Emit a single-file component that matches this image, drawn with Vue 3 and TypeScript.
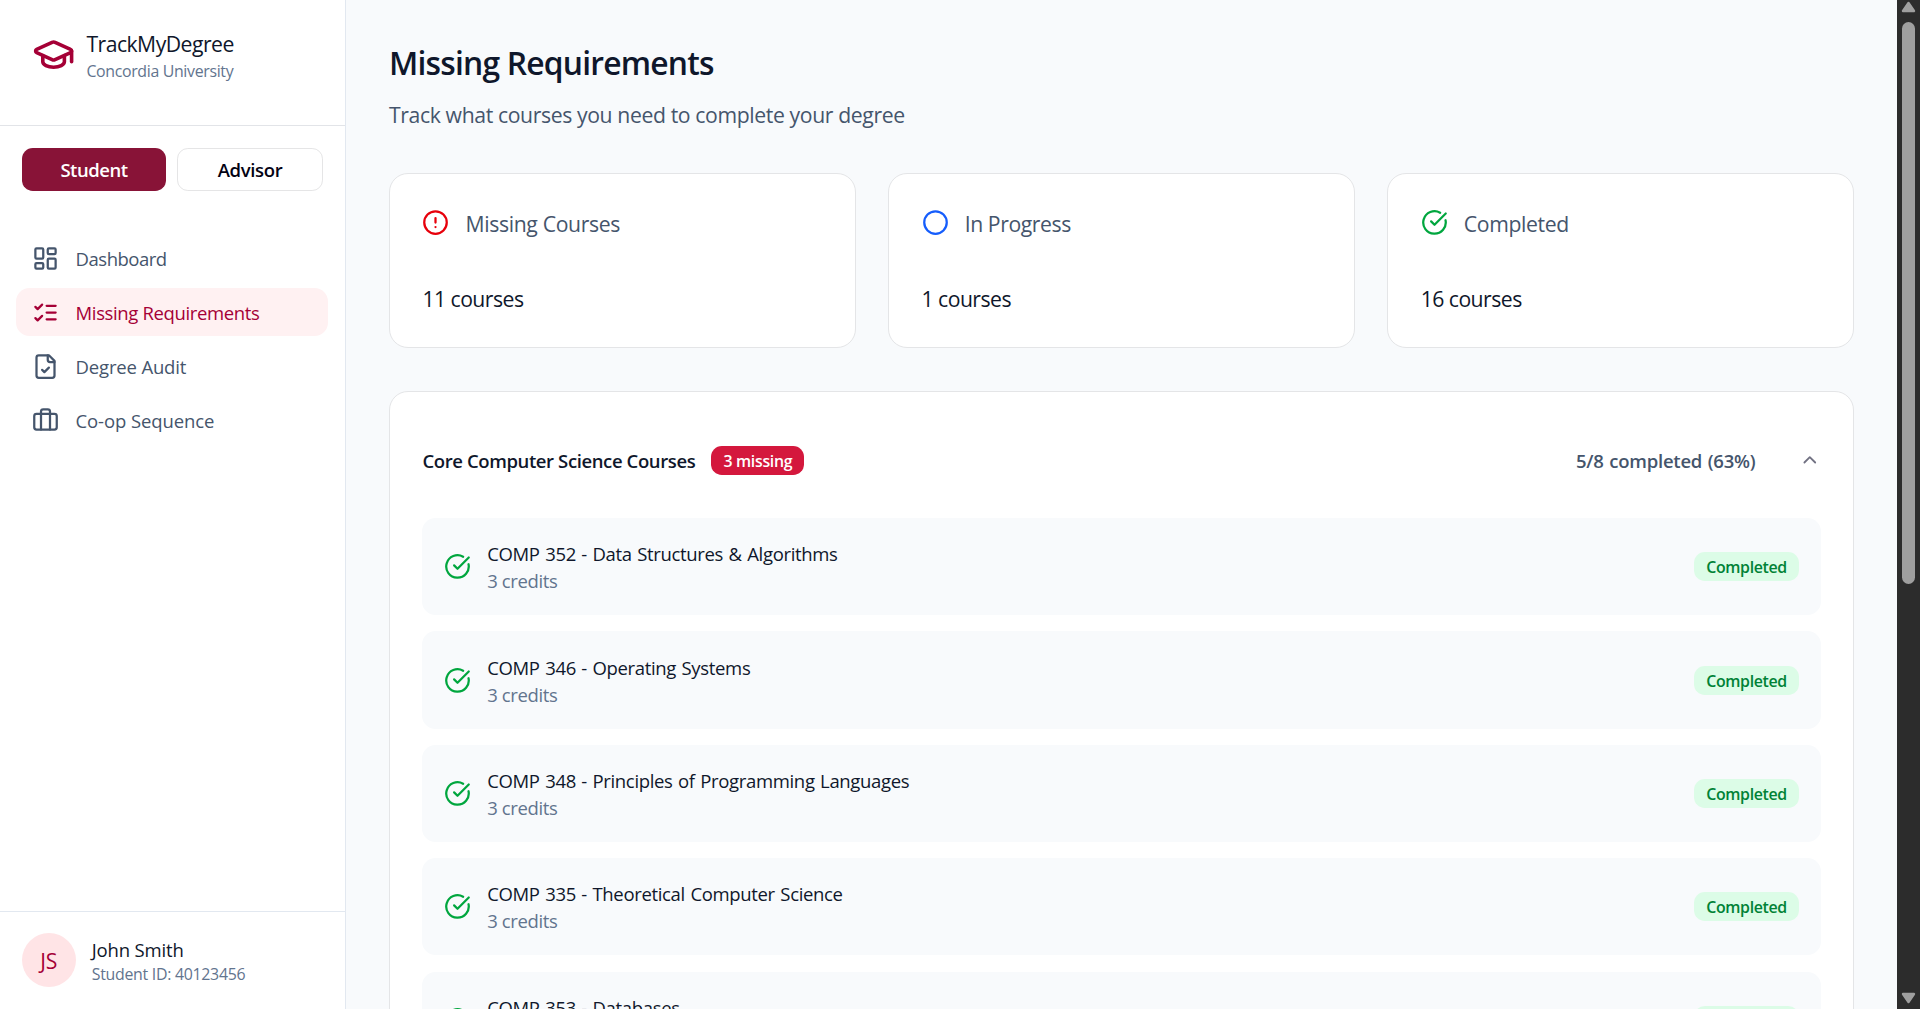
<script setup lang="ts">
interface NavItem {
  label: string
  icon: 'dashboard' | 'checks' | 'audit' | 'coop'
  spacing: number
  active?: boolean
}

interface Summary {
  label: string
  count: number
  tone: 'missing' | 'progress' | 'done'
  spacing: number
}

interface Course {
  code: string
  title: string
  credits: number
}

const navItems: NavItem[] = [
  { label: 'Dashboard', icon: 'dashboard', spacing: -0.026 },
  { label: 'Missing Requirements', icon: 'checks', spacing: -0.02, active: true },
  { label: 'Degree Audit', icon: 'audit', spacing: -0.009 },
  { label: 'Co-op Sequence', icon: 'coop', spacing: -0.006 },
]

const summaries: Summary[] = [
  { label: 'Missing Courses', count: 11, tone: 'missing', spacing: -0.017 },
  { label: 'In Progress', count: 1, tone: 'progress', spacing: -0.02 },
  { label: 'Completed', count: 16, tone: 'done', spacing: -0.017 },
]

const courses: Course[] = [
  { code: 'COMP 352', title: 'Data Structures & Algorithms', credits: 3 },
  { code: 'COMP 346', title: 'Operating Systems', credits: 3 },
  { code: 'COMP 348', title: 'Principles of Programming Languages', credits: 3 },
  { code: 'COMP 335', title: 'Theoretical Computer Science', credits: 3 },
  { code: 'COMP 353', title: 'Databases', credits: 3 },
]
</script>

<template>
  <div class="app">
    <aside class="sidebar">
      <header class="brand">
        <svg class="icon logo" viewBox="0 0 24 24">
          <path d="M21.42 10.922a1 1 0 0 0-.019-1.838L12.83 5.18a2 2 0 0 0-1.66 0L2.6 9.08a1 1 0 0 0 0 1.832l8.57 3.908a2 2 0 0 0 1.66 0z" />
          <path d="M22 10v6" />
          <path d="M6 12.5V16a6 3 0 0 0 12 0v-3.5" />
        </svg>
        <div class="brand-text">
          <div class="brand-name">TrackMyDegree</div>
          <div class="brand-sub">Concordia University</div>
        </div>
      </header>

      <div class="roles">
        <button class="role role-on">Student</button>
        <button class="role role-off">Advisor</button>
      </div>

      <nav class="nav">
        <a v-for="item in navItems" :key="item.label" class="nav-item" :class="{ active: item.active }">
          <svg class="icon" viewBox="0 0 24 24">
            <template v-if="item.icon === 'dashboard'">
              <rect width="7" height="9" x="3" y="3" rx="1" />
              <rect width="7" height="5" x="14" y="3" rx="1" />
              <rect width="7" height="9" x="14" y="12" rx="1" />
              <rect width="7" height="5" x="3" y="16" rx="1" />
            </template>
            <template v-else-if="item.icon === 'checks'">
              <path d="m3 17 2 2 4-4" />
              <path d="m3 7 2 2 4-4" />
              <path d="M13 6h8" />
              <path d="M13 12h8" />
              <path d="M13 18h8" />
            </template>
            <template v-else-if="item.icon === 'audit'">
              <path d="M15 2H6a2 2 0 0 0-2 2v16a2 2 0 0 0 2 2h12a2 2 0 0 0 2-2V7Z" />
              <path d="M14 2v4a2 2 0 0 0 2 2h4" />
              <path d="m9 15 2 2 4-4" />
            </template>
            <template v-else>
              <path d="M16 20V4a2 2 0 0 0-2-2h-4a2 2 0 0 0-2 2v16" />
              <rect width="20" height="14" x="2" y="6" rx="2" />
            </template>
          </svg>
          <span :style="{ letterSpacing: item.spacing + 'em' }">{{ item.label }}</span>
        </a>
      </nav>

      <footer class="user">
        <div class="avatar">JS</div>
        <div class="user-text">
          <div class="user-name">John Smith</div>
          <div class="user-id">Student ID: 40123456</div>
        </div>
      </footer>
    </aside>

    <main class="main">
      <h1>Missing Requirements</h1>
      <p class="lead">Track what courses you need to complete your degree</p>

      <section class="cards">
        <article v-for="s in summaries" :key="s.label" class="card">
          <div class="card-head">
            <svg class="icon" :class="s.tone" viewBox="0 0 24 24">
              <template v-if="s.tone === 'done'">
                <path d="M21.801 10A10 10 0 1 1 17 3.335" />
                <path d="m9 11 3 3L22 4" />
              </template>
              <template v-else>
                <circle cx="12" cy="12" r="10" />
                <path v-if="s.tone === 'missing'" d="M12 8v4M12 16h.01" />
              </template>
            </svg>
            <span class="card-label" :style="{ letterSpacing: s.spacing + 'em' }">{{ s.label }}</span>
          </div>
          <div class="card-value">{{ s.count }} courses</div>
        </article>
      </section>

      <section class="group">
        <div class="group-head">
          <h2>Core Computer Science Courses</h2>
          <span class="badge badge-red">3 missing</span>
          <span class="progress-text">5/8 completed (63%)</span>
          <svg class="icon chevron" viewBox="0 0 24 24"><path d="m18 15-6-6-6 6" /></svg>
        </div>
        <div class="rows">
          <div v-for="c in courses" :key="c.code" class="row">
            <svg class="icon done" viewBox="0 0 24 24">
              <path d="M21.801 10A10 10 0 1 1 17 3.335" />
              <path d="m9 11 3 3L22 4" />
            </svg>
            <div class="row-text">
              <div class="row-title">{{ c.code }} - {{ c.title }}</div>
              <div class="row-credits">{{ c.credits }} credits</div>
            </div>
            <span class="badge badge-green">Completed</span>
          </div>
        </div>
      </section>
    </main>

    <div class="scrollbar">
      <svg width="15" height="12" viewBox="0 0 15 12"><path d="M7.5 2 13 10H2Z" /></svg>
      <div class="thumb"></div>
      <svg class="down" width="15" height="12" viewBox="0 0 15 12"><path d="M7.5 10 13 2H2Z" /></svg>
    </div>
  </div>
</template>

<style>
body {
  overflow: hidden;
}
</style>

<style scoped>
.app {
  display: flex;
  height: 1009px;
  overflow: hidden;
  background: #f8fafc;
  color: #0f172b;
  font-family: "Segoe UI", "Open Sans", "Noto Sans", sans-serif;
  font-size: 18.5px;
}

.icon {
  flex: none;
  width: 27px;
  height: 27px;
  fill: none;
  stroke: currentColor;
  stroke-width: 2;
  stroke-linecap: round;
  stroke-linejoin: round;
}

.sidebar {
  display: flex;
  flex-direction: column;
  flex: none;
  box-sizing: border-box;
  width: 346px;
  border-right: 1px solid #e2e8f0;
  background: #fff;
}

.brand {
  display: flex;
  align-items: center;
  gap: 10.8px;
  box-sizing: border-box;
  height: 126px;
  padding: 0 32.4px 16px;
  border-bottom: 1px solid #e2e4e8;
}

.logo {
  width: 43.2px;
  height: 43.2px;
  color: #a50036;
}

.brand-text {
  padding-top: 1px;
}

.brand-name {
  font-size: 21.2px;
  line-height: 32px;
  letter-spacing: -0.025em;
}

.brand-sub {
  color: #62748e;
  font-size: 15.9px;
  line-height: 23px;
  letter-spacing: -0.021em;
}

.roles {
  display: flex;
  gap: 11px;
  padding: 22px 22px 0;
}

.role {
  box-sizing: border-box;
  height: 43px;
  padding: 0;
  border: 0;
  border-radius: 10.8px;
  font: inherit;
  font-weight: 600;
}

.role-on {
  width: 144px;
  background: #881337;
  color: #fff;
  letter-spacing: -0.025em;
}

.role-off {
  width: 146px;
  border: 1px solid #e5e5e6;
  background: #fff;
  color: #030213;
  letter-spacing: -0.018em;
}

.nav {
  display: flex;
  flex-direction: column;
  gap: 6px;
  padding: 43px 17px 0 16.2px;
}

.nav-item {
  display: flex;
  align-items: center;
  gap: 16.2px;
  height: 48px;
  padding-left: 16.2px;
  border-radius: 13.5px;
  color: #45556c;
}

.nav-item.active {
  background: #fff1f2;
  color: #a50036;
}

.user {
  display: flex;
  align-items: center;
  gap: 16.2px;
  margin-top: auto;
  padding: 21.6px;
  border-top: 1px solid #e2e8f0;
}

.avatar {
  width: 54px;
  height: 54px;
  border-radius: 50%;
  background: #ffe4e6;
  color: #a50036;
  font-size: 21.2px;
  line-height: 55px;
  letter-spacing: -0.02em;
  text-align: center;
}

.user-text {
  padding-top: 1px;
}

.user-name {
  line-height: 27px;
  letter-spacing: -0.009em;
}

.user-id {
  color: #62748e;
  font-size: 15.9px;
  line-height: 22px;
  letter-spacing: -0.018em;
}

.main {
  flex: 1;
  min-width: 0;
  padding: 44.2px 43px 0 43px;
  overflow: hidden;
}

h1 {
  margin: 0;
  font-size: 31.8px;
  font-weight: 600;
  line-height: 38.4px;
  letter-spacing: -0.025em;
}

.lead {
  margin: 16.2px 0 42.2px;
  color: #45556c;
  font-size: 21.2px;
  line-height: 32.4px;
  letter-spacing: -0.018em;
}

.cards {
  display: grid;
  grid-template-columns: repeat(3, 1fr);
  gap: 32.4px;
}

.card,
.group {
  border: 1px solid #e4e5e7;
  border-radius: 19px;
  background: #fff;
}

.card {
  padding: 32.4px;
  font-size: 21.2px;
  line-height: 32.4px;
}

.card-head {
  display: flex;
  align-items: center;
  gap: 16.2px;
  height: 32.4px;
  margin-bottom: 44.2px;
  color: #45556c;
}

.card-label {
  padding-top: 2px;
}

.missing {
  color: #e7000b;
}

.progress {
  color: #155dfc;
}

.done {
  color: #00a63e;
}

.card-value {
  margin-bottom: -1px;
  letter-spacing: -0.025em;
}

.group {
  margin-top: 43px;
  padding: 32px 32.4px;
}

.group-head {
  display: flex;
  align-items: center;
  height: 72px;
  margin-bottom: 21.9px;
}

h2 {
  margin: 0 16px 0 0;
  font-size: 18.5px;
  font-weight: 600;
  letter-spacing: -0.021em;
}

.badge {
  flex: none;
  height: 29px;
  border-radius: 10.8px;
  font-size: 15.9px;
  font-weight: 600;
  line-height: 30px;
  text-align: center;
}

.badge-red {
  width: 93px;
  background: #d4183d;
  color: #fff;
  letter-spacing: -0.02em;
}

.badge-green {
  width: 105px;
  margin-left: auto;
  background: #dcfce7;
  color: #008236;
  letter-spacing: -0.021em;
}

.progress-text {
  margin-left: auto;
  margin-right: 43.6px;
  color: #45556c;
  font-weight: 600;
  letter-spacing: -0.012em;
  word-spacing: 0.05em;
}

.chevron {
  width: 21.6px;
  height: 21.6px;
  color: #717182;
}

.rows {
  display: flex;
  flex-direction: column;
  gap: 16.2px;
}

.row {
  display: flex;
  align-items: center;
  gap: 16.2px;
  box-sizing: border-box;
  height: 97.2px;
  padding: 0 21.6px;
  border-radius: 13.5px;
  background: #f8fafc;
  line-height: 27px;
}

.row-text {
  padding-top: 1px;
}

.row-title {
  letter-spacing: -0.018em;
  word-spacing: 0.055em;
}

.row-credits {
  color: #62748e;
  letter-spacing: -0.02em;
}

.scrollbar {
  display: flex;
  flex-direction: column;
  align-items: center;
  flex: none;
  box-sizing: border-box;
  width: 23px;
  padding: 1px 0 5px;
  background: #2c2c2c;
}

.scrollbar svg {
  fill: #9f9f9f;
  stroke: #9f9f9f;
  stroke-width: 2.4;
  stroke-linejoin: round;
}

.thumb {
  width: 13px;
  height: 562px;
  margin-top: 9px;
  border-radius: 6.5px;
  background: #9f9f9f;
}

.down {
  margin-top: auto;
}
</style>
